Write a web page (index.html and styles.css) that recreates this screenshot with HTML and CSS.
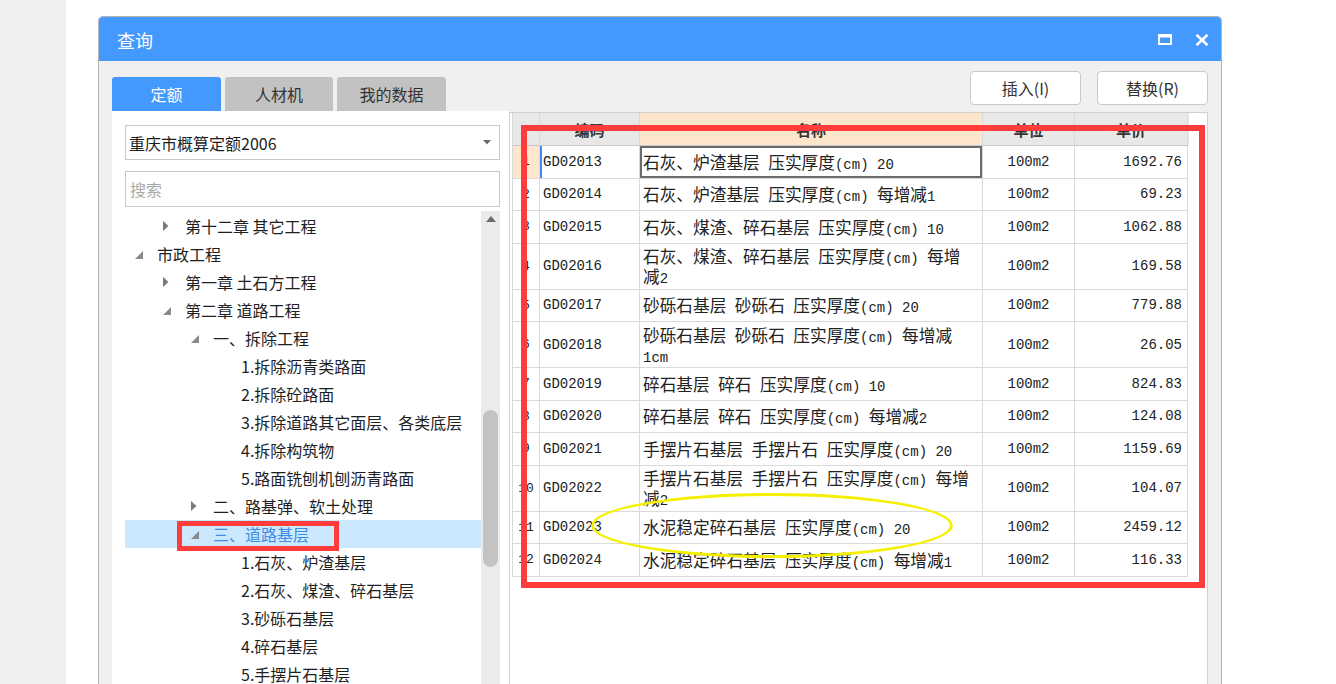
FILE: index.html
```html
<!DOCTYPE html>
<html lang="zh-CN">
<head>
<meta charset="utf-8">
<title>查询</title>
<link rel="stylesheet" href="styles.css">
</head>
<body>
<div class="page">
  <aside class="side"></aside>
  <main class="main">
    <section class="dialog">
      <header class="titlebar">
        <span class="title">查询</span>
        <div class="win-btns">
          <svg class="ic-max" width="14" height="11" viewBox="0 0 14 11"><rect x="1" y="1.5" width="12" height="8.5" fill="none" stroke="#fff" stroke-width="2"/><rect x="0" y="0" width="14" height="3.5" fill="#fff"/></svg>
          <svg class="ic-close" width="14" height="12" viewBox="0 0 14 12"><path d="M1.5 0.8 L12.5 11.2 M12.5 0.8 L1.5 11.2" stroke="#fff" stroke-width="2.6" fill="none"/></svg>
        </div>
      </header>
      <div class="dbody">
        <div class="left">
          <nav class="tabs">
            <span class="tab on">定额</span>
            <span class="tab mid">人材机</span>
            <span class="tab">我的数据</span>
          </nav>
          <div class="lpanel">
            <div class="select"><span>重庆市概算定额2006</span><svg class="dd" width="8" height="5" viewBox="0 0 8 5"><polygon points="0,0 8,0 4,4.5" fill="#6a6a6a"/></svg></div>
            <div class="search">搜索</div>
            <div class="tree-wrap">
              <ul class="tree">
                <li class="lv1"><i class="ar"><svg width="6" height="10" viewBox="0 0 6 10"><polygon points="0,0 5.5,5 0,10" fill="#7a7a7a"/></svg></i>第十二章 其它工程</li>
                <li class="lv0"><i class="ar"><svg class="ex" width="8" height="8" viewBox="0 0 8 8"><polygon points="8,0 8,8 0,8" fill="#8a8a8a"/></svg></i>市政工程</li>
                <li class="lv1"><i class="ar"><svg width="6" height="10" viewBox="0 0 6 10"><polygon points="0,0 5.5,5 0,10" fill="#7a7a7a"/></svg></i>第一章 土石方工程</li>
                <li class="lv1"><i class="ar"><svg class="ex" width="8" height="8" viewBox="0 0 8 8"><polygon points="8,0 8,8 0,8" fill="#8a8a8a"/></svg></i>第二章 道路工程</li>
                <li class="lv2"><i class="ar"><svg class="ex" width="8" height="8" viewBox="0 0 8 8"><polygon points="8,0 8,8 0,8" fill="#8a8a8a"/></svg></i>一、拆除工程</li>
                <li class="lv3"><i class="ar"></i>1.拆除沥青类路面</li>
                <li class="lv3"><i class="ar"></i>2.拆除砼路面</li>
                <li class="lv3"><i class="ar"></i>3.拆除道路其它面层、各类底层</li>
                <li class="lv3"><i class="ar"></i>4.拆除构筑物</li>
                <li class="lv3"><i class="ar"></i>5.路面铣刨机刨沥青路面</li>
                <li class="lv2"><i class="ar"><svg width="6" height="10" viewBox="0 0 6 10"><polygon points="0,0 5.5,5 0,10" fill="#7a7a7a"/></svg></i>二、路基弹、软土处理</li>
                <li class="lv2 sel"><i class="ar"><svg class="ex" width="8" height="8" viewBox="0 0 8 8"><polygon points="8,0 8,8 0,8" fill="#8a8a8a"/></svg></i>三、道路基层</li>
                <li class="lv3"><i class="ar"></i>1.石灰、炉渣基层</li>
                <li class="lv3"><i class="ar"></i>2.石灰、煤渣、碎石基层</li>
                <li class="lv3"><i class="ar"></i>3.砂砾石基层</li>
                <li class="lv3"><i class="ar"></i>4.碎石基层</li>
                <li class="lv3"><i class="ar"></i>5.手摆片石基层</li>
              </ul>
              <div class="vscroll">
                <svg class="up" width="10" height="6" viewBox="0 0 10 6"><polygon points="0,6 10,6 5,0" fill="#6a6a6a"/></svg>
                <span class="thumb"></span>
              </div>
            </div>
          </div>
        </div>
        <div class="right">
          <div class="actions">
            <button class="btn">插入(I)</button>
            <button class="btn">替换(R)</button>
          </div>
          <div class="gridbox">
            <div class="grid">
              <div class="tr th">
                <div class="c-no"></div>
                <div class="c-code h">编码</div>
                <div class="c-name h nm">名称</div>
                <div class="c-unit h">单位</div>
                <div class="c-price h">单价</div>
              </div>
              <div class="tr cur">
                <div class="c-no">1</div><div class="c-code">GD02013</div>
                <div class="c-name"><span>石灰、炉渣基层<b class="en"> </b>压实厚度<b class="en">(cm) 20</b></span></div>
                <div class="c-unit">100m2</div><div class="c-price">1692.76</div>
              </div>
              <div class="tr">
                <div class="c-no">2</div><div class="c-code">GD02014</div>
                <div class="c-name"><span>石灰、炉渣基层<b class="en"> </b>压实厚度<b class="en">(cm) </b>每增减<b class="en">1</b></span></div>
                <div class="c-unit">100m2</div><div class="c-price">69.23</div>
              </div>
              <div class="tr">
                <div class="c-no">3</div><div class="c-code">GD02015</div>
                <div class="c-name"><span>石灰、煤渣、碎石基层<b class="en"> </b>压实厚度<b class="en">(cm) 10</b></span></div>
                <div class="c-unit">100m2</div><div class="c-price">1062.88</div>
              </div>
              <div class="tr tall">
                <div class="c-no">4</div><div class="c-code">GD02016</div>
                <div class="c-name"><span>石灰、煤渣、碎石基层<b class="en"> </b>压实厚度<b class="en">(cm) </b>每增<br>减<b class="en">2</b></span></div>
                <div class="c-unit">100m2</div><div class="c-price">169.58</div>
              </div>
              <div class="tr">
                <div class="c-no">5</div><div class="c-code">GD02017</div>
                <div class="c-name"><span>砂砾石基层<b class="en"> </b>砂砾石<b class="en"> </b>压实厚度<b class="en">(cm) 20</b></span></div>
                <div class="c-unit">100m2</div><div class="c-price">779.88</div>
              </div>
              <div class="tr tall">
                <div class="c-no">6</div><div class="c-code">GD02018</div>
                <div class="c-name"><span>砂砾石基层<b class="en"> </b>砂砾石<b class="en"> </b>压实厚度<b class="en">(cm) </b>每增减<br><b class="en">1cm</b></span></div>
                <div class="c-unit">100m2</div><div class="c-price">26.05</div>
              </div>
              <div class="tr">
                <div class="c-no">7</div><div class="c-code">GD02019</div>
                <div class="c-name"><span>碎石基层<b class="en"> </b>碎石<b class="en"> </b>压实厚度<b class="en">(cm) 10</b></span></div>
                <div class="c-unit">100m2</div><div class="c-price">824.83</div>
              </div>
              <div class="tr">
                <div class="c-no">8</div><div class="c-code">GD02020</div>
                <div class="c-name"><span>碎石基层<b class="en"> </b>碎石<b class="en"> </b>压实厚度<b class="en">(cm) </b>每增减<b class="en">2</b></span></div>
                <div class="c-unit">100m2</div><div class="c-price">124.08</div>
              </div>
              <div class="tr">
                <div class="c-no">9</div><div class="c-code">GD02021</div>
                <div class="c-name"><span>手摆片石基层<b class="en"> </b>手摆片石<b class="en"> </b>压实厚度<b class="en">(cm) 20</b></span></div>
                <div class="c-unit">100m2</div><div class="c-price">1159.69</div>
              </div>
              <div class="tr tall">
                <div class="c-no">10</div><div class="c-code">GD02022</div>
                <div class="c-name"><span>手摆片石基层<b class="en"> </b>手摆片石<b class="en"> </b>压实厚度<b class="en">(cm) </b>每增<br>减<b class="en">2</b></span></div>
                <div class="c-unit">100m2</div><div class="c-price">104.07</div>
              </div>
              <div class="tr">
                <div class="c-no">11</div><div class="c-code">GD02023</div>
                <div class="c-name"><span>水泥稳定碎石基层<b class="en"> </b>压实厚度<b class="en">(cm) 20</b></span></div>
                <div class="c-unit">100m2</div><div class="c-price">2459.12</div>
              </div>
              <div class="tr">
                <div class="c-no">12</div><div class="c-code">GD02024</div>
                <div class="c-name"><span>水泥稳定碎石基层<b class="en"> </b>压实厚度<b class="en">(cm) </b>每增减<b class="en">1</b></span></div>
                <div class="c-unit">100m2</div><div class="c-price">116.33</div>
              </div>
            </div>
          </div>
        </div>
      </div>
    </section>
  </main>
</div>
<div class="mark mark-tree"></div>
<div class="mark mark-table"></div>
<div class="ring"></div>
</body>
</html>
```
FILE: styles.css
```css
html, body {
  margin: 0;
  padding: 0;
}
body {
  overflow: hidden;
  background: #ffffff;
  font-family: "Noto Sans CJK SC", "Microsoft YaHei", sans-serif;
  color: #222;
}
.page {
  display: flex;
  height: 684px;
}
.side {
  flex: none;
  width: 66px;
  background: #eff0f2;
}
.main {
  flex: 1;
  padding: 16px 0 0 32px;
}
.dialog {
  width: 1124px;
  height: 720px;
  box-sizing: border-box;
  border: 1px solid #b3b3b3;
  border-bottom: none;
  border-radius: 5px 5px 0 0;
  background: #f0f0f0;
  display: flex;
  flex-direction: column;
  overflow: hidden;
}
.titlebar {
  flex: none;
  height: 44px;
  background: #4499ff;
  display: flex;
  align-items: center;
  padding: 0 12px 0 18px;
  color: #fff;
}
.title {
  font-size: 18px;
  line-height: 1;
  margin-top: 1px;
}
.win-btns {
  margin-left: auto;
  display: flex;
  align-items: center;
  gap: 23px;
  margin-top: 1px;
}
.dbody {
  flex: 1;
  display: flex;
  padding: 0 13px;
}
.left {
  width: 397px;
  display: flex;
  flex-direction: column;
}
.tabs {
  display: flex;
  gap: 4px;
  margin-top: 16px;
  height: 34px;
}
.tab {
  width: 109px;
  border-radius: 3px 3px 0 0;
  background: #c2c2c2;
  color: #333;
  font-size: 16px;
  display: flex;
  align-items: center;
  justify-content: center;
}
.tab.mid {
  width: 108px;
}
.tab.on {
  background: #4499ff;
  color: #fff;
}
.lpanel {
  flex: 1;
  background: #fff;
  padding: 14px 9px 0 13px;
  display: flex;
  flex-direction: column;
}
.select, .search {
  box-sizing: border-box;
  border: 1px solid #c8c8c8;
  display: flex;
  align-items: center;
  font-size: 16px;
}
.select {
  height: 35px;
  padding: 0 8px 0 3px;
  color: #1e1e1e;
  justify-content: space-between;
}
.search {
  margin-top: 11px;
  height: 36px;
  padding-left: 4px;
  color: #a9a9a9;
}
.tree-wrap {
  margin-top: 4px;
  flex: 1;
  display: flex;
}
.tree {
  list-style: none;
  margin: 0;
  padding: 1px 0 0 0;
  width: 356px;
}
.tree li {
  height: 28px;
  display: flex;
  align-items: center;
  font-size: 16px;
  color: #1f1f1f;
  white-space: nowrap;
}
.tree li.lv0 { padding-left: 8px; }
.tree li.lv1 { padding-left: 36px; }
.tree li.lv2 { padding-left: 64px; }
.tree li.lv3 { padding-left: 92px; }
.tree .ar {
  width: 24px;
  flex: none;
  display: flex;
  align-items: center;
  padding-left: 2px;
  box-sizing: border-box;
}
.tree .ar .ex {
  margin-top: 1px;
}
.tree li.sel {
  background: #cce8ff;
  color: #3b8de6;
}
.vscroll {
  width: 19px;
  background: #ebebeb;
  display: flex;
  flex-direction: column;
  align-items: center;
}
.vscroll .up {
  margin-top: 5px;
}
.vscroll .thumb {
  display: block;
  width: 15px;
  height: 157px;
  margin-top: 188px;
  border-radius: 8px;
  background: #c3c3c3;
}
.right {
  width: 699px;
  display: flex;
  flex-direction: column;
}
.actions {
  margin-top: 10px;
  height: 34px;
  display: flex;
  justify-content: flex-end;
  gap: 16px;
}
.btn {
  width: 111px;
  height: 34px;
  border: 1px solid #c9c9c9;
  border-radius: 4px;
  background: #fff;
  font-family: "Noto Sans CJK SC", sans-serif;
  font-size: 16px;
  color: #333;
  padding: 0;
}
.gridbox {
  margin-top: 7px;
  flex: 1;
  background: #fff;
  border: 1px solid #d0d0d0;
  padding: 0 0 0 2px;
}
.grid {
  width: 676px;
  border-left: 1px solid #d8d8d8;
}
.tr {
  display: grid;
  grid-template-columns: 27px 100px 343px 92px 113px;
  height: 32.5px;
}
.tr.tall {
  height: 46px;
}
.tr > div {
  box-sizing: border-box;
  border-right: 1px solid #dadada;
  border-bottom: 1px solid #dadada;
  display: flex;
  align-items: center;
  overflow: hidden;
  white-space: nowrap;
  font-family: "Liberation Mono", monospace;
  font-size: 14px;
  color: #222;
}
.tr.th {
  height: 33px;
  background: #e8e8e8;
}
.tr.th > div {
  border-bottom-color: #c9c9c9;
}
.tr.th > .h {
  justify-content: center;
  padding: 0;
  font-family: "Noto Sans CJK SC", sans-serif;
  font-weight: bold;
  font-size: 15px;
  color: #333;
}
.tr.th > .nm {
  background: #fde6cb;
}
.c-no {
  justify-content: center;
  font-size: 13px !important;
}
.c-code {
  padding-left: 3px;
}
.tr > .c-name {
  padding-left: 3px;
  overflow: visible;
}
.c-name > span {
  display: block;
  font-family: "Noto Sans CJK SC", sans-serif;
  font-size: 16.7px;
  line-height: 20px;
  white-space: nowrap;
}
.c-name .en {
  font-family: "Liberation Mono", monospace;
  font-size: 14px;
  font-weight: normal;
  line-height: 1;
  white-space: pre;
}
.c-unit {
  justify-content: center;
}
.c-price {
  justify-content: flex-end;
  padding-right: 5px;
}
.tr.cur > .c-no {
  background: #ffe6cc;
}
.tr.cur > .c-code {
  box-shadow: inset 2px 0 0 #3d8bfd;
}
.tr.cur > .c-name {
  box-shadow: inset 0 0 0 2px #6a6a6a;
}
.mark {
  position: absolute;
  box-sizing: border-box;
  border: 5px solid #ff3b3b;
}
.mark-tree {
  left: 177px;
  top: 521px;
  width: 162px;
  height: 30px;
}
.mark-table {
  left: 521px;
  top: 125px;
  width: 684px;
  height: 463px;
  border-width: 6px;
}
.ring {
  position: absolute;
  left: 591px;
  top: 493px;
  width: 362px;
  height: 65px;
  box-sizing: border-box;
  border: 3px solid #f5f000;
  border-radius: 50%;
}
```
